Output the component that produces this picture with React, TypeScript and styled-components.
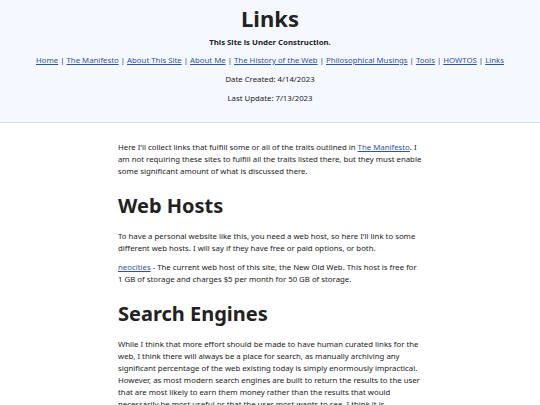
import styled, { createGlobalStyle } from 'styled-components';

const GlobalStyle = createGlobalStyle`
  html, body {
    margin: 0;
    padding: 0;
    background: #ffffff;
  }
  body {
    font-family: "Noto Sans", "DejaVu Sans", sans-serif;
    color: #222222;
  }
`;

const Header = styled.header`
  background: #f5f8ff;
  border-bottom: 1.5px solid #dcdee6;
  padding: 5px 0 18px;
  text-align: center;
`;

const Title = styled.h1`
  margin: 0;
  font-size: 22px;
  line-height: 26px;
  font-weight: 700;
`;

const Subtitle = styled.p`
  margin: 5px 0 0;
  font-size: 7.8px;
  line-height: 12px;
  font-weight: 700;
`;

const Nav = styled.nav`
  margin-top: 6px;
  font-size: 7.8px;
  line-height: 12px;
  color: #333;
`;

const NavLink = styled.a`
  color: #2b54a6;
  text-decoration: underline;
`;

const Meta = styled.p`
  margin: 7px 0 0;
  font-size: 7.8px;
  line-height: 12px;
`;

const Main = styled.main`
  width: 304px;
  margin: 0 auto;
  padding-top: 18px;
`;

const Para = styled.p`
  margin: 0 0 7px;
  font-size: 7.8px;
  line-height: 12px;
`;

const TextLink = styled.a`
  color: #2b54a6;
  text-decoration: underline;
`;

const Heading = styled.h2`
  margin: 15px 0 10px;
  font-size: 20px;
  line-height: 28px;
  font-weight: 700;
`;

const navItems = [
  'Home',
  'The Manifesto',
  'About This Site',
  'About Me',
  'The History of the Web',
  'Philosophical Musings',
  'Tools',
  'HOWTOS',
  'Links',
];

export default function App() {
  return (
    <>
      <GlobalStyle />
      <Header>
        <Title>Links</Title>
        <Subtitle>This Site is Under Construction.</Subtitle>
        <Nav>
          {navItems.map((item, i) => (
            <span key={item}>
              {i > 0 && ' | '}
              <NavLink href="#">{item}</NavLink>
            </span>
          ))}
        </Nav>
        <Meta>Date Created: 4/14/2023</Meta>
        <Meta>Last Update: 7/13/2023</Meta>
      </Header>
      <Main>
        <Para>
          Here I'll collect links that fulfill some or all of the traits outlined in{' '}
          <TextLink href="#">The Manifesto</TextLink>. I am not requiring these sites to
          fulfill all the traits listed there, but they must enable some significant amount
          of what is discussed there.
        </Para>
        <Heading>Web Hosts</Heading>
        <Para>
          To have a personal website like this, you need a web host, so here I'll link to
          some different web hosts. I will say if they have free or paid options, or both.
        </Para>
        <Para>
          <TextLink href="#">neocities</TextLink> - The current web host of this site, the New
          Old Web. This host is free for 1 GB of storage and charges $5 per month for 50 GB of
          storage.
        </Para>
        <Heading>Search Engines</Heading>
        <Para>
          While I think that more effort should be made to have human curated links for the
          web, I think there will always be a place for search, as manually archiving any
          significant percentage of the web existing today is simply enormously impractical.
          However, as most modern search engines are built to return the results to the user
          that are most likely to earn them money rather than the results that would
          necessarily be most useful or that the user most wants to see, I think it is
          important to have alternatives.
        </Para>
      </Main>
    </>
  );
}
